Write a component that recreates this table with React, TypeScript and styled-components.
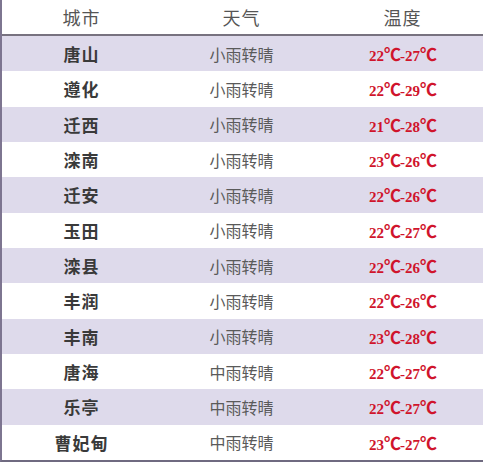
import styled, { createGlobalStyle } from "styled-components";

const GlobalStyle = createGlobalStyle`
  html, body {
    margin: 0;
    padding: 0;
    background: #ffffff;
  }
`;

const Table = styled.div`
  width: 483px;
  height: 462px;
  box-sizing: border-box;
  border-left: 2px solid #7d7590;
  border-bottom: 2px solid #6f6a80;
  display: flex;
  flex-direction: column;
  font-family: "Noto Sans CJK SC", "Noto Sans", sans-serif;
`;

const HeaderRow = styled.div`
  display: grid;
  grid-template-columns: 159px 161px 161px;
  height: 34px;
  align-items: center;
  border-bottom: 2px solid #77727f;
`;

const HeaderCell = styled.div`
  text-align: center;
  font-size: 18px;
  color: #555555;
  letter-spacing: 1px;
`;

const Row = styled.div<{ $shaded: boolean }>`
  display: grid;
  grid-template-columns: 159px 161px 161px;
  flex: 1;
  align-items: center;
  background: ${({ $shaded }) => ($shaded ? "#dedaeb" : "#ffffff")};
`;

const CityCell = styled.div`
  text-align: center;
  font-size: 17px;
  font-weight: 700;
  color: #3a3a3a;
  letter-spacing: 1px;
`;

const WeatherCell = styled.div`
  text-align: center;
  font-size: 16px;
  color: #5a5a5a;
`;

const TempCell = styled.div`
  text-align: center;
  font-family: "Liberation Serif", "DejaVu Serif", serif;
  font-size: 15px;
  font-weight: 700;
  color: #d0142c;
`;

const Unit = styled.span`
  font-family: "Noto Sans CJK SC", sans-serif;
  font-size: 17px;
  font-weight: 700;
  letter-spacing: -1px;
`;

const rows = [
  ["唐山", "小雨转晴", "22", "27"],
  ["遵化", "小雨转晴", "22", "29"],
  ["迁西", "小雨转晴", "21", "28"],
  ["滦南", "小雨转晴", "23", "26"],
  ["迁安", "小雨转晴", "22", "26"],
  ["玉田", "小雨转晴", "22", "27"],
  ["滦县", "小雨转晴", "22", "26"],
  ["丰润", "小雨转晴", "22", "26"],
  ["丰南", "小雨转晴", "23", "28"],
  ["唐海", "中雨转晴", "22", "27"],
  ["乐亭", "中雨转晴", "22", "27"],
  ["曹妃甸", "中雨转晴", "23", "27"],
];

const App = () => {
  return (
    <>
      <GlobalStyle />
      <Table>
        <HeaderRow>
          <HeaderCell>城市</HeaderCell>
          <HeaderCell>天气</HeaderCell>
          <HeaderCell>温度</HeaderCell>
        </HeaderRow>
        {rows.map(([city, weather, low, high], i) => (
          <Row key={city} $shaded={i % 2 === 0}>
            <CityCell>{city}</CityCell>
            <WeatherCell>{weather}</WeatherCell>
            <TempCell>
              {low}
              <Unit>℃</Unit>-{high}
              <Unit>℃</Unit>
            </TempCell>
          </Row>
        ))}
      </Table>
    </>
  );
};

export default App;
